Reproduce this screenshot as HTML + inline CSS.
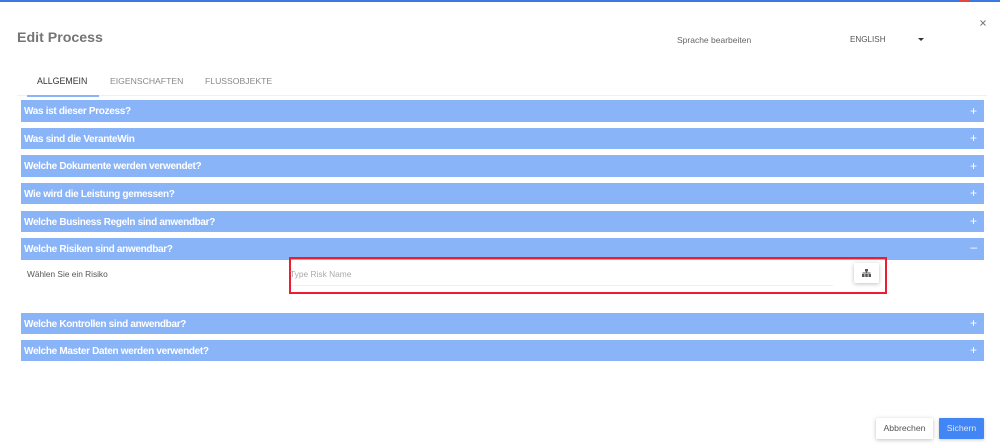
<!DOCTYPE html>
<html>
<head>
<meta charset="utf-8">
<style>
html,body{margin:0;padding:0;background:#fff;}
body{width:1000px;height:445px;position:relative;overflow:hidden;font-family:"Liberation Sans",sans-serif;}
.a{position:absolute;white-space:nowrap;}
.bar{position:absolute;left:21px;width:963px;background:#8ab4f8;color:#fff;font-weight:bold;font-size:10px;letter-spacing:-.32px;box-sizing:border-box;padding-left:3px;}
.bar span{position:absolute;right:7px;top:-1px;font-size:12px;font-weight:normal;letter-spacing:0;}
</style>
</head>
<body>
<div class="a" style="left:0;top:0;width:1000px;height:2px;background:#3b78e0"></div>
<div class="a" style="left:959px;top:0;width:10px;height:2px;background:#e0483e"></div>
<div class="a" style="left:17px;top:29px;font-size:14.2px;line-height:18px;font-weight:bold;color:#757575">Edit Process</div>
<div class="a" style="left:677px;top:35px;font-size:8.5px;line-height:11px;color:#666">Sprache bearbeiten</div>
<div class="a" style="left:850px;top:34px;font-size:8.1px;line-height:11px;color:#555">ENGLISH</div>
<div class="a" style="left:918px;top:38px;width:0;height:0;border-left:3px solid transparent;border-right:3px solid transparent;border-top:3px solid #333"></div>
<svg class="a" style="left:980px;top:20px" width="6" height="6" viewBox="0 0 6 6"><path d="M.5.5l5 5M5.500.5l-5 5" stroke="#777" stroke-width="1" fill="none"/></svg>

<div class="a" style="left:37px;top:76px;font-size:8.8px;line-height:11px;color:#333">ALLGEMEIN</div>
<div class="a" style="left:110px;top:76px;font-size:8.65px;line-height:11px;color:#888">EIGENSCHAFTEN</div>
<div class="a" style="left:205px;top:76px;font-size:8.65px;line-height:11px;color:#888">FLUSSOBJEKTE</div>
<div class="a" style="left:17px;top:95px;width:970px;height:1px;background:#f0f0f0"></div>
<div class="a" style="left:27px;top:95px;width:72px;height:2px;background:#8ab4f8"></div>

<div class="bar" style="top:100px;height:22px;line-height:24px">Was ist dieser Prozess?<span>+</span></div>
<div class="bar" style="top:128px;height:21px;line-height:23px">Was sind die VeranteWin<span>+</span></div>
<div class="bar" style="top:155px;height:22px;line-height:24px">Welche Dokumente werden verwendet?<span>+</span></div>
<div class="bar" style="top:183px;height:21px;line-height:23px">Wie wird die Leistung gemessen?<span>+</span></div>
<div class="bar" style="top:211px;height:21px;line-height:23px">Welche Business Regeln sind anwendbar?<span>+</span></div>
<div class="bar" style="top:238px;height:22px;line-height:24px">Welche Risiken sind anwendbar?<span style="top:-3px">–</span></div>

<div class="a" style="left:27px;top:269px;font-size:8.3px;line-height:11px;color:#555">Wählen Sie ein Risiko</div>
<div class="a" style="left:289px;top:257px;width:598px;height:37px;box-sizing:border-box;border:2.500px solid #ed1c2e"></div>
<div class="a" style="left:290px;top:269px;font-size:8.4px;line-height:11px;color:#aaa">Type Risk Name</div>
<div class="a" style="left:291px;top:285px;width:542px;height:1px;background:#f0f0f0"></div>
<div class="a" style="left:854px;top:263px;width:25px;height:20px;background:#fff;box-shadow:0 1px 4px rgba(0,0,0,.25);border-radius:1px"></div>
<svg class="a" style="left:862px;top:269px" width="9" height="8" viewBox="0 0 9 8"><path d="M3 0h3v2.500H3zM4 2.500h1V4H4zM.5 3.500h8v1h-8zM0 5h2.500v3H0zM3.250 5h2.500v3h-2.500zM6.500 5H9v3H6.500z" fill="#555"/></svg>

<div class="bar" style="top:313px;height:21px;line-height:23px">Welche Kontrollen sind anwendbar?<span>+</span></div>
<div class="bar" style="top:340px;height:21px;line-height:23px">Welche Master Daten werden verwendet?<span>+</span></div>

<div class="a" style="left:876px;top:418px;width:57px;height:21px;background:#fff;box-shadow:0 1px 4px rgba(0,0,0,.25);border-radius:1px;text-align:center;font-size:8.7px;line-height:21px;color:#555">Abbrechen</div>
<div class="a" style="left:939px;top:418px;width:45px;height:21px;background:#4285f4;box-shadow:0 1px 3px rgba(0,0,0,.2);border-radius:1px;text-align:center;font-size:8.7px;line-height:21px;color:#dfe9fb">Sichern</div>
</body>
</html>
